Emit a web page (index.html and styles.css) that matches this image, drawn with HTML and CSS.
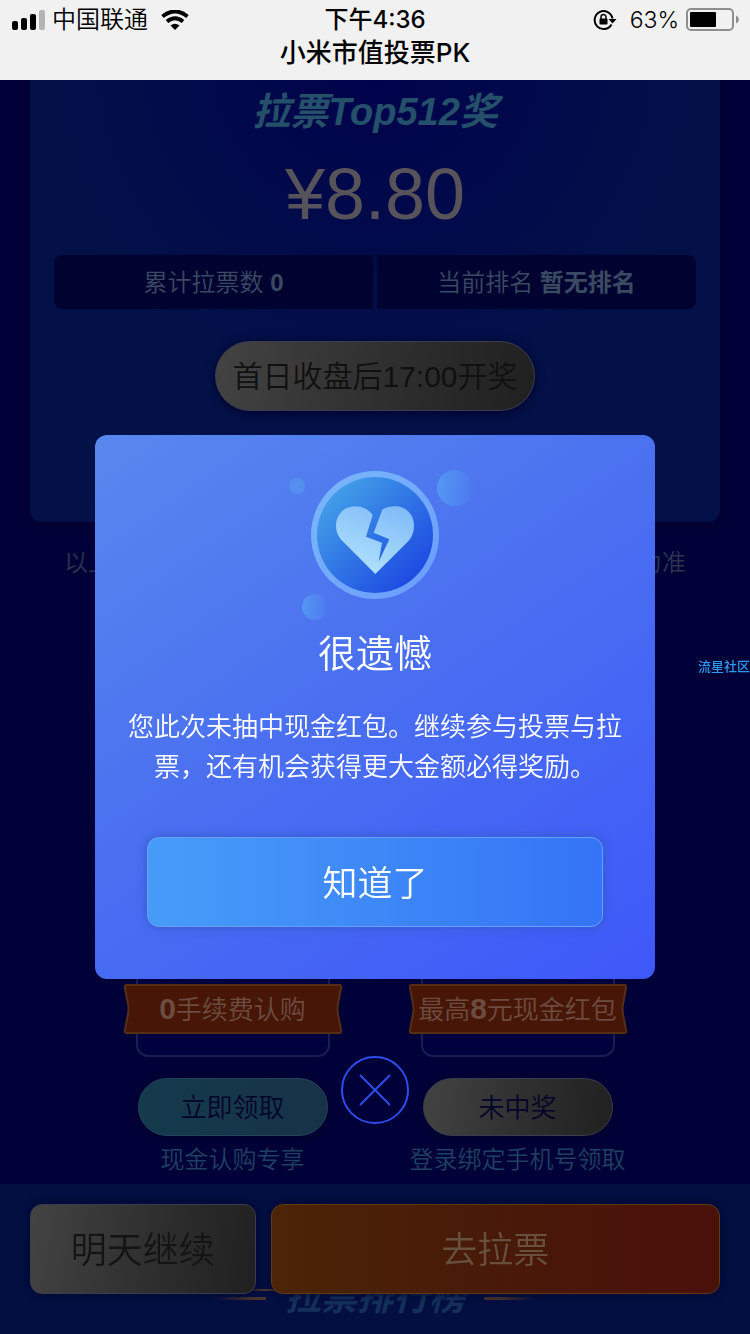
FILE: index.html
```html
<!DOCTYPE html>
<html lang="zh-CN">
<head>
    <meta charset="UTF-8">
    <meta name="viewport" content="width=device-width, initial-scale=1.0">
    <title>小米市值投票PK</title>
    <link rel="stylesheet" href="styles.css">
</head>
<body>
    <header class="top">
        <div class="status">
            <div class="status-left">
                <svg width="34" height="20" viewBox="0 0 34 20" aria-hidden="true">
                    <rect x="1" y="11" width="6" height="9" rx="2"/>
                    <rect x="10" y="8" width="6" height="12" rx="2"/>
                    <rect x="19" y="4" width="6" height="16" rx="2"/>
                    <rect x="28" y="0" width="6" height="20" rx="2" fill="#b4b4b4"/>
                </svg>
                <span>中国联通</span>
                <svg class="wifi" width="28" height="20" viewBox="0 0 28 20" aria-hidden="true">
                    <path d="M1.500 6.500Q14 -3.500 26.500 6.500" fill="none" stroke="#000" stroke-width="4"/>
                    <path d="M6 11.500Q14 5 22 11.500" fill="none" stroke="#000" stroke-width="4"/>
                    <path d="M9.500 15.500Q14 12 18.500 15.500L14 20Z"/>
                </svg>
            </div>
            <div class="status-time">下午4:36</div>
            <div class="status-right">
                <svg width="24" height="22" viewBox="0 0 24 22" aria-hidden="true">
                    <path d="M18.500 15.500A9 9 0 1 1 19.500 9.500" fill="none" stroke="#000" stroke-width="2"/>
                    <path d="M15.500 10H23.500L19.500 14.500Z"/>
                    <rect x="6.500" y="9.500" width="8" height="6" rx="1"/>
                    <path d="M8 10V8a2.500 2.500 0 0 1 5 0V10" fill="none" stroke="#000" stroke-width="1.500"/>
                </svg>
                <span>63%</span>
                <svg width="53" height="24" viewBox="0 0 53 24" aria-hidden="true">
                    <rect x="1" y="1" width="46" height="21" rx="4" fill="none" stroke="#8e8e8e" stroke-width="2"/>
                    <rect x="4" y="4" width="26" height="15" rx="1"/>
                    <path d="M50 7.500Q53 9 53 11.500T50 15.500Z" fill="#8e8e8e"/>
                </svg>
            </div>
        </div>
        <h1 class="top-title">小米市值投票PK</h1>
    </header>

    <main class="page">
        <section class="prize">
            <h2 class="prize-title">拉票Top512奖</h2>
            <div class="prize-amount">¥8.80</div>
            <div class="stats">
                <div class="stat">累计拉票数 <b>0</b></div>
                <div class="stat">当前排名 <b>暂无排名</b></div>
            </div>
            <button class="pill pill-wide" type="button">首日收盘后17:00开奖</button>
        </section>

        <p class="note"><span>以上</span><span>为准</span></p>

        <section class="coupons">
            <div class="coupon">
                <div class="coupon-box">
                    <div class="ribbon">
                        <svg viewBox="0 0 220 50" preserveAspectRatio="none" aria-hidden="true">
                            <path d="M4 1H216Q219 1 218 4L215 20Q214 25 215 30L218 46Q219 49 216 49H4Q1 49 2 46L5 30Q6 25 5 20L2 4Q1 1 4 1Z"/>
                        </svg>
                        <span><b>0</b>手续费认购</span>
                    </div>
                </div>
                <button class="pill pill-teal" type="button">立即领取</button>
                <p>现金认购专享</p>
            </div>
            <div class="coupon">
                <div class="coupon-box">
                    <div class="ribbon">
                        <svg viewBox="0 0 220 50" preserveAspectRatio="none" aria-hidden="true">
                            <path d="M4 1H216Q219 1 218 4L215 20Q214 25 215 30L218 46Q219 49 216 49H4Q1 49 2 46L5 30Q6 25 5 20L2 4Q1 1 4 1Z"/>
                        </svg>
                        <span>最高<b>8</b>元现金红包</span>
                    </div>
                </div>
                <button class="pill" type="button">未中奖</button>
                <p>登录绑定手机号领取</p>
            </div>
        </section>

        <section class="rank">
            <svg class="rank-lines" width="64" height="14" viewBox="0 0 64 14" aria-hidden="true">
                <defs>
                    <linearGradient id="line">
                        <stop offset="0" stop-color="#4a342c" stop-opacity="0"/>
                        <stop offset="0.700" stop-color="#4a342c"/>
                    </linearGradient>
                </defs>
                <rect x="16" y="1" width="48" height="2" fill="url(#line)"/>
                <rect x="0" y="9" width="53" height="3" rx="1" fill="url(#line)"/>
            </svg>
            <h2 class="rank-title">拉票排行榜</h2>
            <svg class="rank-lines rank-lines-right" width="64" height="14" viewBox="0 0 64 14" aria-hidden="true">
                <rect x="16" y="1" width="48" height="2" fill="url(#line)"/>
                <rect x="0" y="9" width="53" height="3" rx="1" fill="url(#line)"/>
            </svg>
        </section>
    </main>

    <nav class="bottom-bar">
        <button class="bar-btn bar-btn-gray" type="button">明天继续</button>
        <button class="bar-btn bar-btn-orange" type="button">去拉票</button>
    </nav>

    <a class="watermark" href="#">流星社区</a>

    <div class="overlay">
        <div class="dialog" role="dialog" aria-labelledby="dialog-title">
            <svg class="dialog-icon" width="200" height="160" viewBox="0 0 200 160" aria-hidden="true">
                <defs>
                    <linearGradient id="ring" x1="0" y1="0" x2="1" y2="1">
                        <stop offset="0" stop-color="#7ab8fa"/>
                        <stop offset="1" stop-color="#6a9bff"/>
                    </linearGradient>
                    <linearGradient id="disc" x1="0.100" y1="0.150" x2="0.850" y2="0.900">
                        <stop offset="0" stop-color="#429fe9"/>
                        <stop offset="1" stop-color="#1d48e1"/>
                    </linearGradient>
                    <linearGradient id="heart" x1="0.800" y1="0" x2="0.400" y2="1">
                        <stop offset="0" stop-color="#80bbf7"/>
                        <stop offset="1" stop-color="#b0e2ff"/>
                    </linearGradient>
                    <linearGradient id="bubble">
                        <stop offset="0" stop-color="#559df4" stop-opacity="0.850"/>
                        <stop offset="1" stop-color="#559df4" stop-opacity="0.050"/>
                    </linearGradient>
                </defs>
                <circle cx="22" cy="21" r="8" fill="#5596f0" opacity="0.700"/>
                <circle cx="180" cy="23" r="18" fill="url(#bubble)"/>
                <circle cx="40" cy="142" r="13" fill="url(#bubble)"/>
                <circle cx="100" cy="70" r="64" fill="url(#ring)"/>
                <circle cx="100" cy="70" r="58" fill="url(#disc)"/>
                <path fill="url(#heart)" d="M97.700 50C93 44 87 41.300 80 41.300C69 41.300 61 50 61 60.500C61 67 63.500 72 67.500 76L100.300 109L133 76.500C137 72 139 67 139 60C139 49.500 131 41.300 120.500 41.300C115.500 41.300 111 42.500 107.300 44.500L98.700 67.700L114.300 74.300L103.700 96.700L107 77.700L91 71.700Z"/>
            </svg>
            <h2 class="dialog-title" id="dialog-title">很遗憾</h2>
            <p class="dialog-text">您此次未抽中现金红包。继续参与投票与拉票，还有机会获得更大金额必得奖励。</p>
            <button class="dialog-btn" type="button">知道了</button>
            <button class="dialog-close" type="button" aria-label="关闭">
                <svg width="68" height="68" viewBox="0 0 68 68" aria-hidden="true">
                    <circle cx="34" cy="34" r="33"/>
                    <path d="M19 19L49 49M49 19L19 49"/>
                </svg>
            </button>
        </div>
    </div>
</body>
</html>
```
FILE: styles.css
```css
* {
    box-sizing: border-box;
}
body {
    margin: 0;
    font-family: "Liberation Sans", "Noto Sans CJK SC", sans-serif;
    font-weight: 350;
    background: #000038;
}
h1, h2, p {
    margin: 0;
}
b {
    font-weight: 700;
}
button {
    font-family: inherit;
    font-weight: 350;
    padding: 0 0 4px;
    cursor: pointer;
}

/* status bar */
.top {
    position: relative;
    z-index: 3;
    height: 80px;
    background: #f1f1f1;
    color: #000;
    font-family: Inter, "Noto Sans CJK SC", sans-serif;
    font-size: 24px;
}
.status {
    display: grid;
    grid-template-columns: 1fr auto 1fr;
    align-items: center;
    height: 40px;
    padding: 0 11px;
}
.status-left, .status-right {
    display: flex;
    align-items: center;
    gap: 7px;
    line-height: 34px;
}
.status-right {
    justify-content: flex-end;
}
.status-right span {
    margin-left: 6px;
    font-size: 23px;
}
.wifi {
    margin-left: 6px;
}
.status-time, .top-title {
    font-size: 26px;
    font-weight: 500;
    line-height: 26px;
    text-align: center;
}
.status-time {
    font-size: 24px;
}

/* page */
.page {
    height: calc(100vh - 80px);
    overflow: hidden;
}
.prize {
    height: 442px;
    margin: 0 30px;
    padding: 8px 24px;
    border-radius: 0 0 12px 12px;
    background: radial-gradient(circle at 50% -5%, #00024c 0, #010a4a 180px, #031148 340px);
    box-shadow: 0 0 12px #00002c;
    text-align: center;
}
.prize-title {
    font-size: 38px;
    line-height: 48px;
    font-style: italic;
    color: #24506a;
}
.prize-amount {
    margin-top: 18px;
    font-size: 72px;
    line-height: 80px;
    color: #56545a;
}
.stats {
    display: grid;
    grid-template-columns: 1fr 1fr;
    gap: 4px;
    margin: 21px 0 32px;
    overflow: hidden;
    border-radius: 8px;
}
.stat {
    padding-top: 2px;
    background: #000230;
    font-size: 24px;
    line-height: 52px;
    color: #3a4a62;
}
.pill {
    width: 190px;
    height: 58px;
    border: 1px solid #3a3d4c;
    border-radius: 35px;
    background: linear-gradient(100deg, #434343, #303030 50%, #202020);
    box-shadow: 0 2px 10px #00002a;
    color: #04042a;
    font-size: 26px;
}
.pill-wide {
    width: 320px;
    height: 70px;
    color: #101010;
    font-size: 30px;
}
.pill-teal {
    border-color: #24435c;
    background: linear-gradient(90deg, #143a4c, #173247);
}
.note {
    display: flex;
    justify-content: space-between;
    margin-top: 24px;
    padding: 0 64px;
    font-size: 24px;
    line-height: 34px;
    color: #2a3550;
}
.coupons {
    display: grid;
    grid-template-columns: 285px 285px;
    justify-content: center;
    margin-top: 260px;
}
.coupon {
    display: flex;
    flex-direction: column;
    align-items: center;
    font-size: 24px;
    line-height: 48px;
    color: #1f4060;
}
.coupon-box {
    display: flex;
    align-items: flex-end;
    width: 194px;
    height: 217px;
    margin-bottom: 21px;
    padding-bottom: 21px;
    border: 2px solid #172050;
    border-radius: 12px;
    background: #00003e;
}
.ribbon {
    position: relative;
    flex: 1;
    margin: 0 -15px;
    padding-top: 2px;
    font-size: 26px;
    line-height: 48px;
    text-align: center;
    white-space: nowrap;
    color: #6c4c40;
}
.ribbon svg {
    position: absolute;
    left: 0;
    top: 0;
    width: 100%;
    height: 100%;
    fill: #481606;
    stroke: #552f12;
    stroke-width: 2px;
}
.ribbon span {
    position: relative;
}
.ribbon b {
    font-size: 30px;
    line-height: 1;
}
.rank {
    display: flex;
    justify-content: center;
    gap: 8px;
    height: 160px;
    padding-top: 90px;
    background: #020f40;
}
.rank-title {
    font-size: 36px;
    line-height: 48px;
    font-style: italic;
    color: #14305a;
}
.rank-lines {
    margin-top: 14px;
}
.rank-lines-right {
    transform: scaleX(-1);
}

/* bottom bar */
.bottom-bar {
    position: fixed;
    left: 0;
    right: 0;
    bottom: 0;
    display: flex;
    gap: 15px;
    height: 150px;
    padding: 20px 30px 40px;
}
.bar-btn {
    flex: 2;
    border: 1px solid #3a3d4c;
    border-radius: 12px;
    background: linear-gradient(100deg, #434343, #303030 50%, #202020);
    box-shadow: 0 0 8px #000530;
    color: #141414;
    font-size: 36px;
}
.bar-btn-orange {
    flex: 4;
    border-color: #5c3c10;
    background: linear-gradient(90deg, #4c2406, #481a08 45%, #4a100a);
    color: #68503f;
}
.watermark {
    position: fixed;
    right: 0;
    top: 657px;
    font-size: 13px;
    font-weight: 500;
    line-height: 20px;
    color: #2f9bee;
    text-decoration: none;
}

/* dialog */
.overlay {
    position: fixed;
    top: 80px;
    right: 0;
    bottom: 0;
    left: 0;
    z-index: 2;
    display: flex;
    align-items: center;
    justify-content: center;
}
.dialog {
    position: relative;
    display: flex;
    flex-direction: column;
    width: 560px;
    padding: 30px 32px 52px;
    border-radius: 12px;
    background: linear-gradient(145deg, #5888ee, #4a70f0 45%, #3e58f9);
    color: #fff;
    text-align: center;
}
.dialog-icon {
    align-self: center;
}
.dialog-title {
    margin: 4px 0 28px;
    font-size: 38px;
    line-height: 50px;
    font-weight: 350;
}
.dialog-text {
    margin-bottom: 50px;
    font-size: 26px;
    line-height: 40px;
}
.dialog-btn {
    height: 90px;
    margin: 0 20px;
    border: 1px solid #68a0ff;
    border-radius: 12px;
    background: linear-gradient(90deg, #479cf8, #3474f6);
    box-shadow: 0 0 10px #3458c4;
    color: #fff;
    font-size: 35px;
}
.dialog-close {
    position: absolute;
    top: calc(100% + 77px);
    left: calc(50% - 34px);
    width: 68px;
    height: 68px;
    padding: 0;
    border: 0;
    background: none;
}
.dialog-close svg {
    display: block;
    fill: none;
    stroke: #2f4cea;
    stroke-width: 2px;
}
```
